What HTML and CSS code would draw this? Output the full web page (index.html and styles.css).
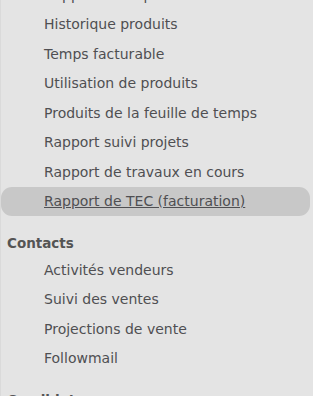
FILE: index.html
```html
<!DOCTYPE html>
<html lang="fr">
<head>
<meta charset="utf-8">
<title>Menu</title>
<link rel="stylesheet" href="styles.css">
</head>
<body>
<nav class="sidebar">
  <ul class="items first">
    <li><a href="#">Rapport de dépenses</a></li>
    <li><a href="#">Historique produits</a></li>
    <li><a href="#">Temps facturable</a></li>
    <li><a href="#">Utilisation de produits</a></li>
    <li><a href="#">Produits de la feuille de temps</a></li>
    <li><a href="#">Rapport suivi projets</a></li>
    <li><a href="#">Rapport de travaux en cours</a></li>
    <li class="active"><a href="#">Rapport de TEC (facturation)</a></li>
  </ul>
  <h3 class="section">Contacts</h3>
  <ul class="items">
    <li><a href="#">Activités vendeurs</a></li>
    <li><a href="#">Suivi des ventes</a></li>
    <li><a href="#">Projections de vente</a></li>
    <li><a href="#">Followmail</a></li>
  </ul>
  <h3 class="section">Candidats</h3>
</nav>
</body>
</html>
```
FILE: styles.css
```css
html, body {
  margin: 0;
  padding: 0;
  background: #e4e4e4;
  height: 100%;
  overflow: hidden;
}
body {
  font-family: "DejaVu Sans", Verdana, sans-serif;
  color: #515151;
}
.sidebar {
  border-left: 1px solid #dadada;
  padding-right: 3px;
}
.items {
  list-style: none;
  margin: 0;
  padding: 0;
}
.items.first {
  margin-top: -20px;
}
.items li {
  height: 29.5px;
  display: flex;
  align-items: center;
  padding-left: 43px;
  border-radius: 11px;
}
.items a {
  color: #4f4f52;
  text-decoration: none;
  font-size: 14px;
}
.items li.active {
  background: #c8c8c8;
}
.items li.active a {
  text-decoration: underline;
}
.section {
  margin: 0;
  padding: 19px 0 0 6px;
  height: 20px;
  box-sizing: content-box;
  font-size: 13.5px;
  font-weight: bold;
  color: #545454;
  line-height: 16px;
}
```
